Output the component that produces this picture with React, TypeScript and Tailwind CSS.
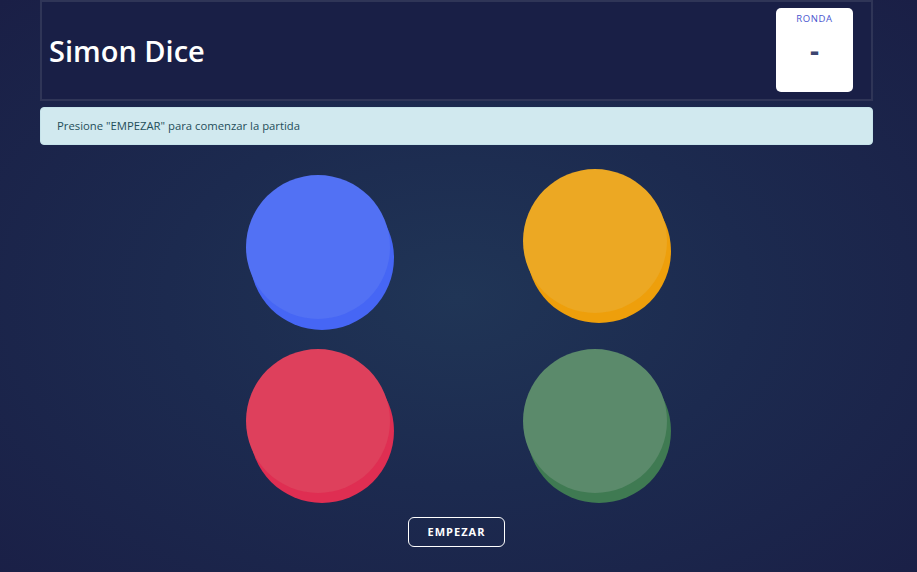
export default function App() {
	const buttons = [
		{ name: "azul", cls: "bg-[#5271f4] shadow-[4px_11px_0_0_#4666f5] translate-y-[6px]" },
		{ name: "amarillo", cls: "bg-[#eca823] shadow-[4px_10px_0_0_#ee9f0b]" },
		{ name: "rojo", cls: "bg-[#de405c] shadow-[4px_10px_0_0_#df2e52]" },
		{ name: "verde", cls: "bg-[#5b8a6b] shadow-[4px_10px_0_0_#3f7a52]" },
	];

	return (
		<div className="w-full h-[572px] overflow-hidden bg-[radial-gradient(ellipse_at_50%_52%,#203556_0%,#1c2a4f_45%,#1a1f46_100%)] font-['Open_Sans',sans-serif]">
			<div className="ml-[40px] w-[833px]">
				<header className="flex items-center justify-between h-[101px] border-2 border-[#2f3557] bg-[#191f46] pl-[7px] pr-[18px]">
					<h1 className="text-[29px] font-semibold text-white tracking-[0px]">
						Simon Dice
					</h1>
					<div className="w-[77px] h-[84px] mt-[-1px] bg-white rounded-[5px] flex flex-col items-center">
						<span className="mt-[4px] text-[9.5px] tracking-[0.6px] text-[#4a55cf]">
							RONDA
						</span>
						<span className="mt-[10px] text-[28px] font-bold leading-none text-[#3c4470]">
							-
						</span>
					</div>
				</header>
				<div className="mt-[6px] h-[38px] flex items-center rounded-[4px] bg-[#d1e9ef] border border-[#c6e3ea] pl-[16px] text-[11.3px] text-[#1f4e5a]">
					Presione "EMPEZAR" para comenzar la partida
				</div>
			</div>

			<main className="flex flex-col items-center">
				<div className="grid grid-cols-2 gap-x-[133px] gap-y-[36px] mt-[24px] ml-[-5px]">
					{buttons.map((b) => (
						<button
							key={b.name}
							aria-label={b.name}
							className={"w-[144px] h-[144px] rounded-full " + b.cls}
						/>
					))}
				</div>
				<button className="mt-[24px] w-[97px] h-[30px] ml-[-4px] rounded-[6px] border border-white text-white text-[11px] font-bold tracking-[1px]">
					EMPEZAR
				</button>
			</main>
		</div>
	);
}
